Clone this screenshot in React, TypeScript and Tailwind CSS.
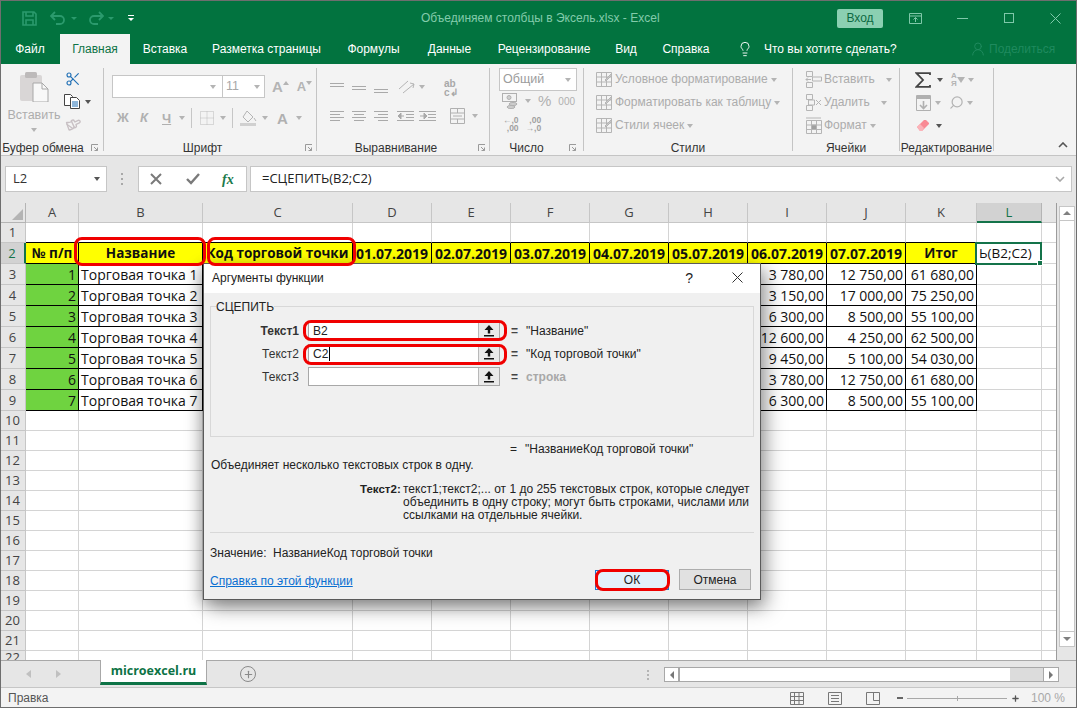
import { Scissors, Lightbulb, Paintbrush, Search, UserRound, Plus } from "lucide-react"

const columns = ["A", "B", "C", "D", "E", "F", "G", "H", "I", "J", "K", "L", ""]

const titles = ["№ п/п", "Название", "Код торговой точки", "01.07.2019", "02.07.2019", "03.07.2019", "04.07.2019", "05.07.2019", "06.07.2019", "07.07.2019", "Итог"]

const data = [
  ["3 780,00", "12 750,00", "61 680,00"],
  ["3 150,00", "17 000,00", "75 250,00"],
  ["6 300,00", "8 500,00", "55 100,00"],
  ["12 600,00", "4 250,00", "62 500,00"],
  ["9 450,00", "5 100,00", "54 030,00"],
  ["3 780,00", "12 750,00", "61 680,00"],
  ["6 300,00", "8 500,00", "55 100,00"],
]

const rowNumbers = Array.from({ length: 22 }, (_, i) => i + 1)

function Caret({ dark }: { dark?: boolean }) {
  return dark ? (
    <span className="inline-block h-0 w-0 border-x-[3.5px] border-t-[4px] border-x-transparent border-t-[#555555]" />
  ) : (
    <span className="inline-block h-0 w-0 border-x-[3.5px] border-t-[4px] border-x-transparent border-t-[#b4b4b4]" />
  )
}

function Lines({ rows }: { rows: number[][] }) {
  return (
    <svg width="15" height="14" viewBox="0 0 15 14" fill="none" stroke="#a9a9a9" strokeWidth="1">
      {rows.map((r, i) => (
        <path key={i} d={`M${r[0]} ${r[2]}.5H${r[1]}`} />
      ))}
    </svg>
  )
}

function Launcher() {
  return (
    <svg width="8" height="8" viewBox="0 0 8 8" fill="none" stroke="#9a9a9a" strokeWidth="1">
      <path d="M.5 7V.5H7M3 3l3.5 3.5M6.5 3.5v3h-3" />
    </svg>
  )
}

function Group({ width, label, launcher, slot, children }: { width: string; label: string; launcher?: boolean; slot?: string; children: React.ReactNode }) {
  return (
    <div className={`${width} flex h-full shrink-0 flex-col border-r border-[#c4c4c4]`}>
      <div className="h-[72px] shrink-0">{children}</div>
      <div className="flex h-[16px] items-center text-[12px] text-[#333333]">
        <span className="flex-1 whitespace-nowrap text-center">{label}</span>
        {launcher && <span className={`${slot} flex justify-center`}><Launcher /></span>}
      </div>
    </div>
  )
}

function GridIcon({ className }: { className?: string }) {
  return (
    <svg className={className} width="16" height="15" viewBox="0 0 16 15" fill="none" stroke="#b5b5b5" strokeWidth="1">
      <path d="M.5 .5h15v14H.5zM.5 5h15M.5 10h15M5.5 .5v14M10.5 .5v14" />
      <path d="M9 8l6-6 1 1-6 6z" fill="#c8c8c8" />
    </svg>
  )
}

function CellsIcon({ kind }: { kind: number }) {
  return (
    <svg width="17" height="17" viewBox="0 0 17 17" fill="none" stroke="#b5b5b5" strokeWidth="1">
      {kind === 0 && <path d="M1.5 .5h6v5h-6zM1.5 11.5h6v5h-6zM7.5 6h9v4h-9zM1 8.5h5M3 6.5l-2 2 2 2" />}
      {kind === 1 && <path d="M1.5 .5h6v5h-6zM1.5 11.5h6v5h-6zM3.5 6h6v5h-6zM11 6l5 5M16 6l-5 5" />}
      {kind === 2 && <path d="M1.5 3.5h15v13h-15zM1.5 8h15M1.5 12.5h15M6.5 3.5v13M11.5 3.5v13M1 1h15" />}
      {kind === 2 && <path d="M6.5 8h5v4.5h-5z" fill="#a0a0a0" />}
    </svg>
  )
}

function StackRow({ icon, text, gap }: { icon: React.ReactNode; text: string; gap: string }) {
  return (
    <div className="flex h-[23px] items-center">
      <span className="flex w-[19px] shrink-0">{icon}</span>
      <span className="-mt-[2px] whitespace-nowrap text-[12px] text-[#acacac]">{text}</span>
      <span className={`${gap} flex`}><Caret /></span>
    </div>
  )
}

function Ribbon() {
  return (
    <div className="flex h-[92px] items-stretch border-b border-[#c4c4c4] bg-[#f3f3f3] py-[4px]">
      {/* Буфер обмена */}
      <Group width="w-[104px]" label="Буфер обмена" launcher slot="w-[17px]">
        <div className="flex">
          <div className="flex w-[68px] flex-col items-center">
            <svg className="mt-[3px]" width="30" height="31" viewBox="0 0 30 31">
              <rect x="1" y="4" width="22" height="26" rx="2" fill="#d9d6d6" />
              <rect x="6" y="1" width="12" height="6" rx="1.5" fill="#bdbaba" />
              <path d="M14 12h9l6 6v13H14z" fill="#f8f8f8" stroke="#a8a8a8" />
              <path d="M23 12v6h6" fill="none" stroke="#a8a8a8" />
            </svg>
            <span className="mt-[4px] text-[12.5px] leading-[18px] text-[#adadad]">Вставить</span>
            <span className="mt-[4px] flex"><Caret /></span>
          </div>
          <div className="-ml-[4px] mt-[2px] flex flex-col">
            <Scissors className="ml-[1px] mt-[1px] -scale-y-100" size={16} color="#1f6fb5" strokeWidth={1.7} />
            <div className="mt-[7px] flex items-center">
              <svg width="16" height="15" viewBox="0 0 16 15" fill="#ffffff" stroke="#444444" strokeWidth="1">
                <path d="M.5 .5h6l2 2v9h-8z" />
                <path d="M6.5 3.5h6l3 3v8h-9z" />
                <path d="M8 8h6M8 10h6M8 12h6" stroke="#1f6fb5" />
              </svg>
              <span className="ml-[5px] flex"><Caret dark /></span>
            </div>
            <Paintbrush className="ml-[1px] mt-[8px] rotate-[20deg]" size={15} color="#c8c0c4" strokeWidth={2.2} />
          </div>
        </div>
      </Group>

      {/* Шрифт */}
      <Group width="w-[213px]" label="Шрифт" launcher slot="w-[15px]">
        <div className="ml-[8px] mt-[7px] flex h-[23px] items-center">
          <div className="flex h-full w-[111px] items-center justify-end border border-[#c6c6c6] bg-white pr-[6px]"><Caret /></div>
          <div className="flex h-full w-[42px] items-center justify-between border border-l-0 border-[#c6c6c6] bg-white pl-[3px] pr-[4px] text-[12.5px] text-[#a8a8a8]">11<Caret /></div>
          <span className="ml-[7px] text-[15px] font-bold leading-none text-[#b4b4b4]">A</span>
          <span className="-mt-[8px] flex rotate-180"><Caret /></span>
          <span className="ml-[8px] text-[13px] font-bold leading-none text-[#b4b4b4]">A</span>
          <span className="-mt-[8px] flex"><Caret /></span>
        </div>
        <div className="ml-[13px] mt-[9px] flex h-[22px] items-center text-[#b0b0b0]">
          <span className="w-[23px] text-[13px] font-extrabold">Ж</span>
          <span className="w-[22px] text-[13px] font-extrabold italic">К</span>
          <span className="w-[17px] text-[13px] font-extrabold leading-[15px] underline">Ч</span>
          <Caret />
          <span className="ml-[6px] h-[20px] w-px bg-[#c6c6c6]" />
          <svg className="ml-[8px]" width="14" height="14" viewBox="0 0 14 14" fill="none" stroke="#bbbbbb" strokeDasharray="1 1">
            <path d="M.5 .5h13v13H.5zM7 .5v13M.5 7h13" />
          </svg>
          <span className="ml-[6px] flex"><Caret /></span>
          <span className="ml-[6px] h-[20px] w-px bg-[#c6c6c6]" />
          <svg className="ml-[7px]" width="18" height="16" viewBox="0 0 18 16" fill="none" stroke="#b4b4b4">
            <path d="M7 1l6 6-5 5-5-5zM14 8l2 3" />
            <rect x="0" y="13" width="16" height="3" fill="#d0d0d0" stroke="none" />
          </svg>
          <span className="ml-[4px] flex"><Caret /></span>
          <span className="ml-[9px] text-[15px] font-bold leading-none">A</span>
          <span className="ml-[8px] flex"><Caret /></span>
        </div>
      </Group>

      {/* Выравнивание */}
      <Group width="w-[173px]" label="Выравнивание" launcher slot="w-[14px]">
        <div className="ml-[13px] mt-[8px] flex h-[22px] items-center">
          <span className="flex w-[22px]"><Lines rows={[[0, 14, 3], [0, 14, 6]]} /></span>
          <span className="flex w-[22px]"><Lines rows={[[0, 14, 6], [0, 14, 9]]} /></span>
          <span className="flex w-[24px]"><Lines rows={[[0, 14, 9], [0, 14, 12]]} /></span>
          <svg width="17" height="14" viewBox="0 0 17 14" fill="none" stroke="#b4b4b4">
            <path d="M1 9L10 1M5 13l11-9M12 3l4 1-1 4" />
          </svg>
          <span className="ml-[4px] flex"><Caret /></span>
          <span className="ml-[19px] mt-[2px] flex flex-col text-[10px] font-semibold leading-[9px] text-[#a8a8a8]"><span>ab</span><span>c↲</span></span>
        </div>
        <div className="ml-[13px] mt-[7px] flex h-[22px] items-center">
          <span className="flex w-[22px]"><Lines rows={[[0, 14, 2], [0, 10, 5], [0, 14, 8], [0, 10, 11]]} /></span>
          <span className="flex w-[22px]"><Lines rows={[[0, 14, 2], [2, 12, 5], [0, 14, 8], [2, 12, 11]]} /></span>
          <span className="flex w-[23px]"><Lines rows={[[0, 14, 2], [4, 14, 5], [0, 14, 8], [4, 14, 11]]} /></span>
          <svg width="17" height="14" viewBox="0 0 17 14" fill="none" stroke="#a9a9a9">
            <path d="M0 2.5h17M9 5.5h8M9 8.5h8M0 11.5h17M1 7h6" />
            <path d="M1 7l3-3v6z" fill="#a9a9a9" />
          </svg>
          <svg className="ml-[5px]" width="17" height="14" viewBox="0 0 17 14" fill="none" stroke="#a9a9a9">
            <path d="M0 2.5h17M9 5.5h8M9 8.5h8M0 11.5h17M1 7h5" />
            <path d="M8 7L5 4v6z" fill="#a9a9a9" />
          </svg>
          <svg className="ml-[14px]" width="15" height="16" viewBox="0 0 15 16" fill="none" stroke="#b0b0b0">
            <path d="M.5 .5h14v15H.5zM.5 5h14M.5 11h14M7.5 .5V5M7.5 11v4.5M3 8h9" />
          </svg>
          <span className="ml-[7px] flex"><Caret /></span>
        </div>
      </Group>

      {/* Число */}
      <Group width="w-[94px]" label="Число" launcher slot="w-[20px]">
        <div className="ml-[9px] flex h-[23px] w-[78px] items-center justify-between border border-[#c6c6c6] bg-white pl-[3px] pr-[5px] text-[12.5px] text-[#9c9c9c]">Общий<Caret /></div>
        <div className="ml-[12px] flex h-[20px] items-center text-[#b0b0b0]">
          <svg width="17" height="16" viewBox="0 0 17 16" fill="#cfcfcf" stroke="#b0b0b0">
            <rect x=".5" y=".5" width="14" height="8" fill="none" />
            <circle cx="7" cy="4.5" r="2" />
            <ellipse cx="11" cy="11" rx="4" ry="1.5" />
            <ellipse cx="9" cy="14" rx="4" ry="1.5" />
          </svg>
          <span className="ml-[6px] flex"><Caret /></span>
          <span className="ml-[7px] text-[15px]">%</span>
          <span className="ml-[7px] text-[10px]">000</span>
        </div>
        <div className="ml-[13px] mt-[3px] flex h-[20px] items-center text-[8.5px] font-semibold leading-[8px] text-[#a0a0a0]">
          <span className="text-right">←,0<br />,00</span>
          <span className="ml-[7px] text-right">,00<br />→,0</span>
        </div>
      </Group>

      {/* Стили */}
      <Group width="w-[209px]" label="Стили">
        <div className="ml-[12px]">
          <StackRow icon={<GridIcon />} text="Условное форматирование" gap="ml-[3px]" />
          <StackRow icon={<GridIcon />} text="Форматировать как таблицу" gap="ml-[3px]" />
          <StackRow icon={<GridIcon />} text="Стили ячеек" gap="ml-[3px]" />
        </div>
      </Group>

      {/* Ячейки */}
      <Group width="w-[107px]" label="Ячейки">
        <div className="ml-[12px]">
          <StackRow icon={<CellsIcon kind={0} />} text="Вставить" gap="ml-[11px]" />
          <StackRow icon={<CellsIcon kind={1} />} text="Удалить" gap="ml-[11px]" />
          <StackRow icon={<CellsIcon kind={2} />} text="Формат" gap="ml-[3px]" />
        </div>
      </Group>

      {/* Редактирование */}
      <Group width="w-[94px]" label="Редактирование">
        <div className="ml-[15px] flex h-[23px] items-center">
          <svg width="16" height="16" viewBox="0 0 16 16" fill="none" stroke="#444444" strokeWidth="1.8">
            <path d="M15 3V1.2H1.5L8 8l-6.5 6.8H15V13" />
          </svg>
          <span className="ml-[6px] flex"><Caret dark /></span>
          <span className="ml-[8px] flex flex-col text-[8px] font-semibold leading-[8px] text-[#b4b4b4]"><span>А</span><span>Я</span></span>
          <span className="h-0 w-0 border-x-[4px] border-t-[6px] border-x-transparent border-t-[#b4b4b4]" />
          <span className="ml-[3px] flex"><Caret /></span>
        </div>
        <div className="ml-[16px] flex h-[23px] items-center">
          <svg width="15" height="16" viewBox="0 0 15 16" fill="none" stroke="#b0b0b0">
            <path d="M.5 .5h14v15H.5z" />
            <rect x="1" y="1" width="13" height="3" fill="#b0b0b0" stroke="none" />
            <path d="M7.5 6v7M4 10l3.5 3.5L11 10" strokeWidth="1.6" />
          </svg>
          <span className="ml-[4px] flex"><Caret /></span>
          <Search className="ml-[8px] -scale-x-100" size={15} color="#b4b4b4" strokeWidth={2} />
          <span className="ml-[3px] flex"><Caret /></span>
        </div>
        <div className="ml-[16px] flex h-[23px] items-center">
          <svg width="14" height="13" viewBox="0 0 14 13">
            <path d="M1 8l7-7h2l3 3v1l-7 7H4z" fill="#f98a94" />
            <path d="M1 8l3-3 4 4-2 3H4z" fill="#fbb3b9" />
          </svg>
          <span className="ml-[6px] flex"><Caret dark /></span>
        </div>
      </Group>

      <div className="flex flex-1 items-end justify-end pb-[3px] pr-[9px]">
        <svg width="10" height="6" viewBox="0 0 10 6" fill="none" stroke="#555555" strokeWidth="1.6"><path d="M1 5l4-4 4 4" /></svg>
      </div>
    </div>
  )
}

function FormulaBar() {
  return (
    <div className="flex h-[47px] items-center bg-[#e6e6e6] pb-[1px] pl-[5px] pr-[5px]">
      <div className="flex h-[26px] w-[102px] items-center justify-between border border-[#c6c6c6] bg-white pl-[7px] pr-[6px] font-['Open_Sans',sans-serif] text-[13px] text-[#333333]">
        L2
        <Caret dark />
      </div>
      <div className="ml-[14px] flex w-[3px] flex-col gap-[3px]">
        <span className="h-[2px] w-[2px] bg-[#a8a8a8]" />
        <span className="h-[2px] w-[2px] bg-[#a8a8a8]" />
        <span className="h-[2px] w-[2px] bg-[#a8a8a8]" />
      </div>
      <div className="ml-[14px] flex h-[26px] w-[109px] items-center border border-[#c6c6c6] bg-white pl-[11px]">
        <svg width="12" height="12" viewBox="0 0 12 12" fill="none" stroke="#7a7a7a" strokeWidth="2"><path d="M1 1l10 10M11 1L1 11" /></svg>
        <svg className="ml-[24px]" width="14" height="12" viewBox="0 0 14 12" fill="none" stroke="#7a7a7a" strokeWidth="2.4"><path d="M1 6l4 4 8-9" /></svg>
        <span className="ml-[22px] font-['Liberation_Serif',serif] text-[14px] font-bold italic text-[#1b7a4b]">fx</span>
      </div>
      <div className="ml-[3px] flex h-[26px] flex-1 items-center justify-between border border-[#c6c6c6] bg-white pl-[11px] pr-[6px] font-['Open_Sans',sans-serif] text-[13px] text-[#222222]">
        =СЦЕПИТЬ(B2;C2)
        <svg width="10" height="6" viewBox="0 0 10 6" fill="none" stroke="#a8a8a8" strokeWidth="1.6"><path d="M1 1l4 4 4-4" /></svg>
      </div>
    </div>
  )
}

function bodyCellClass(row: number, col: number) {
  if (col > 10 || row > 9) return "border-r border-b border-[#d4d4d4]"
  if (row === 1) return "border-r border-b border-r-[#d4d4d4] border-b-black"
  if (row === 2 && (col < 3 || col === 10)) return "border-r border-b border-black bg-[#ffff00] font-bold text-[#111111] text-center text-[13.5px]"
  if (row === 2) return "border-r border-b border-black bg-[#ffff00] font-bold text-[#111111] text-center"
  if (col === 0) return "border-r border-b border-black bg-[#6fd340] text-right pr-[2px]"
  return "border-r border-b border-black"
}

function bodyCellText(row: number, col: number) {
  if (row === 2 && col < 11) return titles[col]
  if (row === 2 && col === 11) return "Ь(B2;C2)"
  if (row >= 3 && row <= 9) {
    const i = row - 3
    if (col === 0) return String(i + 1)
    if (col === 1) return `Торговая точка ${i + 1}`
    if (col === 8) return data[i][0]
    if (col === 9) return data[i][1]
    if (col === 10) return data[i][2]
  }
  return ""
}

function Sheet() {
  return (
    <div className="relative h-[457px] overflow-hidden">
      <div className="absolute bottom-0 right-0 top-0 w-[21px] border-l border-[#9c9c9c] bg-[#e6e6e6]" />
      <div className="grid w-[1056px] grid-cols-[26px_53px_124px_150px_79px_79px_79px_79px_79px_79px_79px_71px_65px_15px] grid-rows-[20px_20px_repeat(8,21px)_repeat(12,20px)] font-['Open_Sans',sans-serif] text-[14px] leading-none text-[#111111]">
        <div className="flex items-end justify-end border-r border-b border-[#b4b4b4] bg-[#e6e6e6] p-[2px]">
          <span className="h-0 w-0 border-b-[11px] border-l-[11px] border-b-[#b4b4b4] border-l-transparent" />
        </div>
        {columns.map((c) =>
          c === "L" ? (
            <div key={c} className="flex items-center justify-center border-r border-b-2 border-r-[#b4b4b4] border-b-[#14734a] bg-[#d2d2d2] text-[13px] text-[#14734a]">{c}</div>
          ) : (
            <div key={c} className="flex items-center justify-center border-r border-b border-[#c6c6c6] bg-[#e6e6e6] text-[13px] text-[#444444]">{c}</div>
          ),
        )}
        {rowNumbers.map((row) => (
          <div key={row} className="contents">
            {row === 2 ? (
              <div className="flex items-center justify-center border-r-2 border-b border-r-[#14734a] border-b-[#c6c6c6] bg-[#d2d2d2] text-[13px] text-[#14734a]">{row}</div>
            ) : (
              <div className="flex items-center justify-center border-r border-b border-[#c6c6c6] bg-[#e6e6e6] text-[13px] text-[#444444]">{row}</div>
            )}
            {columns.map((_, col) => (
              <div key={col} className={`${bodyCellClass(row, col)} overflow-hidden whitespace-nowrap pt-[4px] ${col === 1 && row > 2 && row < 10 ? "pl-[2px]" : ""} ${col >= 8 && col <= 10 && row > 2 && row < 10 ? "pr-[2px] text-right" : ""} ${col === 11 ? "pl-[2px] text-[13.5px]" : ""}`}>
                {bodyCellText(row, col)}
              </div>
            ))}
          </div>
        ))}
      </div>
      {/* Вертикальная прокрутка */}
      <div className="absolute bottom-[13px] right-[2px] top-[3px] flex w-[16px] flex-col border border-[#c6c6c6] bg-[#d8d8d8]">
        <div className="flex h-[14px] items-center justify-center border-b border-[#c6c6c6] bg-white"><span className="h-0 w-0 border-x-[4px] border-b-[4px] border-x-transparent border-b-[#808080]" /></div>
        <div className="h-[420px] bg-white" />
        <div className="mt-auto flex h-[15px] items-center justify-center border-t border-[#c6c6c6] bg-white"><span className="h-0 w-0 border-x-[4px] border-t-[4px] border-x-transparent border-t-[#808080]" /></div>
      </div>
    </div>
  )
}

function UpButton() {
  return (
    <div className="flex w-[21px] items-center justify-center border-l border-[#b8b8b8] bg-[#e9e9e9]">
      <svg width="10" height="12" viewBox="0 0 10 12" fill="#111111"><path d="M5 0l4.5 5H6.2v3.5H3.8V5H.5zM0 10h10v1.6H0z" /></svg>
    </div>
  )
}

function ArgRow({ label, value, result, bold, muted, caret }: { label: string; value: string; result: string; bold?: boolean; muted?: boolean; caret?: boolean }) {
  return (
    <div className="flex h-[19px] items-center">
      <span className={`w-[88px] text-right ${bold ? "font-bold" : ""} text-[#333333]`}>{label}</span>
      <div className="ml-[9px] flex h-full w-[192px] border border-[#a8a8a8] bg-white">
        <span className="flex flex-1 items-center pl-[4px]">
          {value}
          {caret && <span className="ml-px h-[14px] w-px bg-black" />}
        </span>
        <UpButton />
      </div>
      <span className="ml-[11px] w-[15px] font-bold text-[#444444]">=</span>
      {muted ? <span className="font-bold text-[#a8a8a8]">{result}</span> : <span>{result}</span>}
    </div>
  )
}

function Dialog() {
  return (
    <div className="absolute left-[203px] top-[263px] z-10 flex h-[337px] w-[558px] flex-col border border-[#5a5a5a] bg-[#f0f0f0] text-[12px] leading-none text-[#222222] shadow-[6px_8px_18px_rgba(0,0,0,0.35),-4px_4px_14px_rgba(0,0,0,0.25)]">
      <div className="flex h-[29px] shrink-0 items-center bg-white pb-[2px] pl-[8px]">
        <span>Аргументы функции</span>
        <span className="ml-auto text-[14px]">?</span>
        <svg className="ml-[39px] mr-[17px]" width="11" height="11" viewBox="0 0 11 11" fill="none" stroke="#333333"><path d="M.5 .5l10 10M10.5 .5l-10 10" /></svg>
      </div>
      <div className="relative mx-[6px] mt-[13px] h-[131px] shrink-0 border border-[#d8d8d8]">
        <span className="absolute -top-[6px] left-[5px] bg-[#f0f0f0]">СЦЕПИТЬ</span>
        <div className="flex flex-col gap-[4px] pt-[14px]">
          <ArgRow label="Текст1" value="B2" result={'"Название"'} bold />
          <ArgRow label="Текст2" value="C2" result={'"Код торговой точки"'} caret />
          <ArgRow label="Текст3" value="" result="строка" muted />
        </div>
      </div>
      <div className="ml-[306px] mt-[5px] flex h-[14px] items-center">
        <span className="w-[15px]">=</span>
        <span>"НазваниеКод торговой точки"</span>
      </div>
      <div className="ml-[7px] mt-[3px] h-[14px]">Объединяет несколько текстовых строк в одну.</div>
      <div className="ml-[156px] mt-[10px] flex leading-[13px]">
        <span className="w-[43px] text-[11.5px] font-bold">Текст2:</span>
        <span className="whitespace-nowrap">
          текст1;текст2;... от 1 до 255 текстовых строк, которые следует<br />
          объединить в одну строку; могут быть строками, числами или<br />
          ссылками на отдельные ячейки.
        </span>
      </div>
      <div className="mx-[6px] mt-[10px] h-px bg-[#d8d8d8]" />
      <div className="ml-[6px] mt-[13px] flex h-[14px] items-center">
        <span className="w-[63px]">Значение:</span>
        <span>НазваниеКод торговой точки</span>
      </div>
      <div className="ml-[6px] mr-[9px] mt-[9px] flex items-center">
        <span className="mr-auto whitespace-nowrap pt-[2px] text-[#0a6fd1] underline">Справка по этой функции</span>
        <div className="flex h-[20px] w-[74px] items-center justify-center border border-[#1a78d4] bg-[#e3f0fa]">ОК</div>
        <div className="ml-[10px] flex h-[21px] w-[72px] items-center justify-center border border-[#adadad] bg-[#e1e1e1]">Отмена</div>
      </div>
    </div>
  )
}

function SheetTabs() {
  return (
    <div className="flex h-[28px] items-start border-y border-y-[#a8a8a8] border-b-[#c6c6c6] bg-[#e6e6e6] text-[#b4b4b4]">
      <div className="flex h-full w-[100px] shrink-0 items-center pl-[26px]">
        <span className="h-0 w-0 border-y-[4px] border-r-[5px] border-y-transparent border-r-[#c0c0c0]" />
        <span className="ml-[25px] h-0 w-0 border-y-[4px] border-l-[5px] border-y-transparent border-l-[#c0c0c0]" />
      </div>
      <div className="-mt-px flex h-[25px] w-[107px] shrink-0 items-center justify-center border-x border-b-[3px] border-x-[#a8a8a8] border-b-[#0d7346] bg-white font-['Open_Sans',sans-serif] text-[12.5px] font-bold text-[#0d7346]">microexcel.ru</div>
      <div className="ml-[33px] mt-[5px] flex h-[16px] w-[16px] items-center justify-center rounded-full border-[1.5px] border-[#8a8a8a]">
        <Plus size={11} color="#8a8a8a" strokeWidth={2.5} />
      </div>
      <div className="ml-[391px] mt-[9px] flex w-[3px] flex-col gap-[2px]">
        <span className="h-[2px] w-[2px] bg-[#b4b4b4]" />
        <span className="h-[2px] w-[2px] bg-[#b4b4b4]" />
        <span className="h-[2px] w-[2px] bg-[#b4b4b4]" />
      </div>
      <div className="ml-[14px] mt-[6px] flex h-[15px] w-[395px] border border-[#a8a8a8] bg-[#dcdcdc]">
        <div className="flex w-[15px] items-center justify-center border-r-2 border-[#a8a8a8] bg-white"><span className="h-0 w-0 border-y-[4px] border-r-[4px] border-y-transparent border-r-[#777777]" /></div>
        <div className="w-[330px] bg-white" />
        <div className="ml-auto flex w-[15px] items-center justify-center border-l border-[#a8a8a8] bg-white"><span className="h-0 w-0 border-y-[4px] border-l-[4px] border-y-transparent border-l-[#777777]" /></div>
      </div>
    </div>
  )
}

function StatusBar() {
  return (
    <div className="flex h-[20px] items-center bg-[#f3f3f3] pl-[8px] text-[12px] text-[#555555]">
      <span className="w-[40px]">Правка</span>
      <svg className="ml-[742px]" width="14" height="13" viewBox="0 0 14 13" fill="none" stroke="#777777"><path d="M.5 .5h13v12H.5zM.5 4.5h13M.5 8.5h13M4.5 .5v12M9 .5v12" /></svg>
      <svg className="ml-[24px]" width="14" height="13" viewBox="0 0 14 13" fill="none" stroke="#777777"><path d="M.5 .5h13v12H.5zM3 3.5h8M3 6.5h8M3 9.5h8" /></svg>
      <svg className="ml-[24px]" width="14" height="13" viewBox="0 0 14 13" fill="none" stroke="#777777"><path d="M.5 .5h13v12H.5zM7.5 .5v8M7.5 8.5h6" /></svg>
      <span className="ml-[17px] h-[2px] w-[6px] bg-[#666666]" />
      <div className="relative ml-[4px] h-px w-[100px] bg-[#a8a8a8]">
        <span className="absolute -top-[2px] left-1/2 h-[5px] w-px bg-[#a8a8a8]" />
      </div>
      <span className="ml-[4px] flex"><Plus size={9} color="#555555" strokeWidth={3.5} /></span>
      <span className="ml-[11px] text-[#a8a8a8]">100 %</span>
    </div>
  )
}

export default function App() {
  return (
    <div className="relative flex h-[708px] w-[1077px] flex-col overflow-hidden bg-white font-['Liberation_Sans',sans-serif]">
      {/* Заголовок окна */}
      <div className="flex h-[34px] shrink-0 items-center bg-[#02733f] pt-[2px] text-[12px]">
        <svg className="ml-[22px]" width="15" height="15" viewBox="0 0 15 15" fill="none" stroke="#2b9a6d" strokeWidth="1.6">
          <path d="M1 1h11l2 2v11H1zM4 1v4h7V1M4 14V9h7v5" />
        </svg>
        <svg className="ml-[13px]" width="16" height="14" viewBox="0 0 16 14" fill="none" stroke="#2b9a6d" strokeWidth="1.8">
          <path d="M1 5h9a4 4 0 010 8H6M5 1L1 5l4 4" />
        </svg>
        <span className="ml-[5px] h-0 w-0 border-x-[3px] border-t-[3px] border-x-transparent border-t-[#2b9a6d]" />
        <svg className="ml-[11px]" width="16" height="14" viewBox="0 0 16 14" fill="none" stroke="#2b9a6d" strokeWidth="1.8">
          <path d="M15 5H6a4 4 0 000 8h4M11 1l4 4-4 4" />
        </svg>
        <span className="ml-[4px] h-0 w-0 border-x-[3px] border-t-[3px] border-x-transparent border-t-[#2b9a6d]" />
        <span className="ml-[14px] flex flex-col items-center gap-[2px]">
          <span className="h-px w-[6px] bg-white" />
          <span className="h-0 w-0 border-x-[3px] border-t-[3px] border-x-transparent border-t-white" />
        </span>
        <span className="ml-[287px] w-[235px] whitespace-nowrap text-center text-[#82cbab]">Объединяем столбцы в Эксель.xlsx  -  Excel</span>
        <span className="ml-[181px] flex h-[19px] w-[46px] items-center justify-center rounded-[2px] bg-[#8bd0b2] text-[#0d6a42]">Вход</span>
        <svg className="ml-[26px]" width="13" height="11" viewBox="0 0 13 11" fill="none" stroke="#7fc8a9"><path d="M.5 .5h12v10H.5zM.5 3h12M6.5 9V4.5M4.5 6.5l2-2 2 2" /></svg>
        <span className="ml-[35px] h-px w-[11px] bg-[#7fc8a9]" />
        <span className="ml-[36px] h-[10px] w-[10px] border border-[#7fc8a9]" />
        <svg className="ml-[36px]" width="11" height="11" viewBox="0 0 11 11" fill="none" stroke="#7fc8a9"><path d="M.5 .5l10 10M10.5 .5l-10 10" /></svg>
      </div>

      {/* Вкладки */}
      <div className="flex h-[30px] shrink-0 items-center bg-[#02733f] text-[12px] text-white">
        <span className="w-[60px] text-center">Файл</span>
        <span className="flex h-full w-[70px] items-center justify-center bg-[#f3f3f3] text-[#0d7346]">Главная</span>
        <span className="w-[70px] text-center">Вставка</span>
        <span className="w-[133px] text-center">Разметка страницы</span>
        <span className="w-[81px] text-center">Формулы</span>
        <span className="w-[71px] text-center">Данные</span>
        <span className="w-[118px] text-center">Рецензирование</span>
        <span className="w-[46px] text-center">Вид</span>
        <span className="w-[74px] text-center">Справка</span>
        <Lightbulb className="ml-[14px]" size={16} color="#ffffff" strokeWidth={1.4} />
        <span className="ml-[11px] w-[126px] whitespace-nowrap">Что вы хотите сделать?</span>
        <UserRound className="ml-[80px]" size={16} color="#1f8a5e" strokeWidth={1.5} />
        <span className="ml-[3px] text-[#1f8a5e]">Поделиться</span>
      </div>

      <Ribbon />
      <FormulaBar />
      <Sheet />
      <SheetTabs />
      <StatusBar />

      <Dialog />

      {/* Красные пометки */}
      <div className="absolute left-[74px] top-[237px] z-20 h-[29px] w-[132px] rounded-[8px] border-[3px] border-[#f00000]" />
      <div className="absolute left-[207px] top-[237px] z-20 h-[29px] w-[149px] rounded-[8px] border-[3px] border-[#f00000]" />
      <div className="absolute left-[303px] top-[320px] z-20 h-[21px] w-[204px] rounded-[8px] border-[3px] border-[#f00000]" />
      <div className="absolute left-[303px] top-[344px] z-20 h-[21px] w-[204px] rounded-[8px] border-[3px] border-[#f00000]" />
      <div className="absolute left-[595px] top-[569px] z-20 h-[22px] w-[75px] rounded-[8px] border-[3px] border-[#f00000]" />

      {/* Выделенная ячейка */}
      <div className="absolute left-[975px] top-[242px] h-[23px] w-[67px] border-2 border-[#14734a]">
        <span className="absolute -bottom-[3px] -right-[3px] h-[6px] w-[6px] border border-white bg-[#14734a]" />
      </div>

      {/* Рамка окна */}
      <div className="pointer-events-none absolute inset-0 z-30 border border-[#6e6e6e]" />
    </div>
  )
}
